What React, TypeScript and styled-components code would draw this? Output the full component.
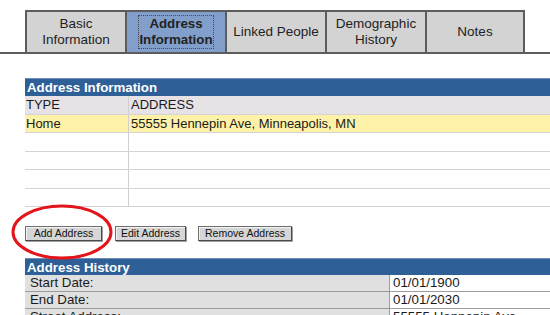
import styled, { createGlobalStyle } from "styled-components";

const GlobalStyle = createGlobalStyle`
  body {
    margin: 0;
    background: #ffffff;
    font-family: "Liberation Sans", Arial, sans-serif;
    color: #1a1a1a;
  }
`;

const Page = styled.div`
  padding-top: 10px;
  width: 550px;
  height: 315px;
  overflow: hidden;
`;

const TabBar = styled.div`
  display: flex;
  padding-left: 25px;
  border-bottom: 2px solid #5c5c5c;
`;

const Tab = styled.div<{ active?: boolean; last?: boolean }>`
  box-sizing: border-box;
  width: 100px;
  height: 42px;
  display: flex;
  align-items: center;
  justify-content: center;
  text-align: center;
  border-top: 2px solid #5c5c5c;
  border-left: 2px solid #5c5c5c;
  border-right: ${(p) => (p.last ? "2px solid #5c5c5c" : "none")};
  background: ${(p) => (p.active ? "#819fca" : "#d3d3d3")};
  font-size: ${(p) => (p.active ? "13.3px" : "13.5px")};
  font-weight: ${(p) => (p.active ? "bold" : "normal")};
  line-height: 16px;
  color: #222;
`;

const FocusLabel = styled.span`
  outline: 1px dotted #4a4a4a;
  outline-offset: 0;
`;

const Content = styled.div`
  padding-left: 25px;
  margin-top: 24px;
`;

const SectionHeader = styled.div<{ h: number }>`
  height: ${(p) => p.h}px;
  background: #2e6097;
  color: #ffffff;
  font-weight: bold;
  font-size: 13.3px;
  line-height: ${(p) => p.h}px;
  padding-left: 2px;
  border-top: 1px solid #6d8fb8;
  box-sizing: border-box;
`;

const InfoRow = styled.div<{ kind?: "head" | "hit" }>`
  box-sizing: border-box;
  display: grid;
  grid-template-columns: 104px 1fr;
  height: 18.5px;
  border-bottom: 1px solid #d4d4d4;
  background: ${(p) =>
    p.kind === "head" ? "#e6e2e6" : p.kind === "hit" ? "#fdf2a8" : "#ffffff"};
  font-size: 13px;
  line-height: 18px;
`;

const InfoCell = styled.div<{ first?: boolean }>`
  padding-left: ${(p) => (p.first ? "1px" : "2px")};
  border-right: ${(p) => (p.first ? "1px solid #cfcfcf" : "none")};
  white-space: nowrap;
`;

const ButtonRow = styled.div`
  position: relative;
  display: flex;
  margin-top: 19px;
  height: 15px;
`;

const Button = styled.button<{ w: number; gap: number }>`
  box-sizing: border-box;
  width: ${(p) => p.w}px;
  height: 15px;
  margin: 0 ${(p) => p.gap}px 0 0;
  padding: 0;
  background: #d6d6d6;
  border: 1px solid #6e6e6e;
  border-right-color: #4a4a4a;
  border-bottom-color: #4a4a4a;
  box-shadow: inset 1px 1px 0 #f4f4f4, 1px 1px 0 #a0a0a0;
  font-family: "Liberation Sans", Arial, sans-serif;
  font-size: 10.5px;
  line-height: 13px;
  color: #111;
`;

const Circle = styled.svg`
  position: absolute;
  left: -14px;
  top: -22px;
  overflow: visible;
  pointer-events: none;
`;

const History = styled.div`
  margin-top: 17px;
`;

const HistRow = styled.div`
  box-sizing: border-box;
  display: grid;
  grid-template-columns: 364px 1fr;
  height: 17px;
  border-bottom: 1px solid #9c9c9c;
  font-size: 13.3px;
  line-height: 16px;
`;

const HistLabel = styled.div`
  background: #e0e0e0;
  padding-left: 5px;
  white-space: nowrap;
`;

const HistValue = styled.div`
  background: #ffffff;
  border-left: 1px solid #9c9c9c;
  padding-left: 3px;
  white-space: nowrap;
`;

const tabs = [
  { label: ["Basic", "Information"] },
  { label: ["Address", "Information"], active: true },
  { label: ["Linked People"] },
  { label: ["Demographic", "History"] },
  { label: ["Notes"] },
];

const rows = [
  ["Home", "55555 Hennepin Ave, Minneapolis, MN"],
  ["", ""],
  ["", ""],
  ["", ""],
  ["", ""],
];

const history = [
  ["Start Date:", "01/01/1900"],
  ["End Date:", "01/01/2030"],
  ["Street Address:", "55555 Hennepin Ave"],
];

function App() {
  return (
    <Page>
      <GlobalStyle />
      <TabBar>
        {tabs.map((t, i) => {
          const text = t.label.map((l, j) => (
            <span key={j}>
              {j > 0 && <br />}
              {l}
            </span>
          ));
          return (
            <Tab key={i} active={t.active} last={i === tabs.length - 1}>
              {t.active ? <FocusLabel>{text}</FocusLabel> : <div>{text}</div>}
            </Tab>
          );
        })}
      </TabBar>
      <Content>
        <SectionHeader h={18}>Address Information</SectionHeader>
        <InfoRow kind="head">
          <InfoCell first>TYPE</InfoCell>
          <InfoCell>ADDRESS</InfoCell>
        </InfoRow>
        {rows.map((r, i) => (
          <InfoRow key={i} kind={i === 0 ? "hit" : undefined}>
            <InfoCell first>{r[0]}</InfoCell>
            <InfoCell>{r[1]}</InfoCell>
          </InfoRow>
        ))}
        <ButtonRow>
          <Button w={77} gap={13}>Add Address</Button>
          <Button w={71} gap={12}>Edit Address</Button>
          <Button w={94} gap={0}>Remove Address</Button>
          <Circle width="102" height="56" viewBox="0 0 102 56">
            <ellipse cx="51" cy="28" rx="49" ry="26" fill="none" stroke="#e3141b" strokeWidth="3" />
          </Circle>
        </ButtonRow>
        <History>
          <SectionHeader h={17}>Address History</SectionHeader>
          {history.map((h, i) => (
            <HistRow key={i}>
              <HistLabel>{h[0]}</HistLabel>
              <HistValue>{h[1]}</HistValue>
            </HistRow>
          ))}
        </History>
      </Content>
    </Page>
  );
}

export default App;
